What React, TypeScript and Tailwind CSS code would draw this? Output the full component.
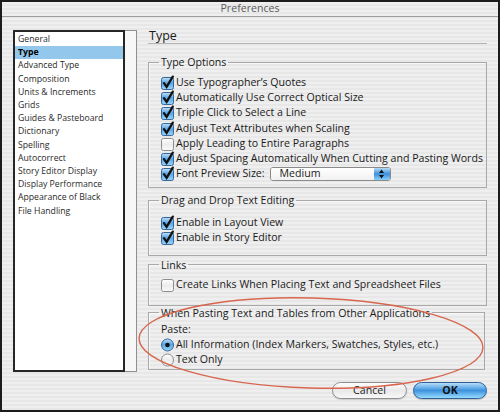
import { FunctionComponent, ReactNode } from 'react';

const listItems = [
  'General',
  'Type',
  'Advanced Type',
  'Composition',
  'Units & Increments',
  'Grids',
  'Guides & Pasteboard',
  'Dictionary',
  'Spelling',
  'Autocorrect',
  'Story Editor Display',
  'Display Performance',
  'Appearance of Black',
  'File Handling',
];

const Check: FunctionComponent<{ on: boolean }> = ({ on }) => (
  <svg width="14" height="14" viewBox="0 0 14 14" className="shrink-0 overflow-visible">
    <rect
      x="0.5"
      y="1.5"
      width="12"
      height="12"
      rx="2"
      fill={on ? 'url(#cbBlue)' : 'url(#cbWhite)'}
      stroke={on ? '#35679c' : '#8c8c8c'}
    />
    {on && (
      <path d="M3 7.2 L5.6 10.8 L11.8 0.6" stroke="#111" strokeWidth="2.3" fill="none" strokeLinecap="round" />
    )}
  </svg>
);

const Radio: FunctionComponent<{ on: boolean }> = ({ on }) => (
  <svg width="14" height="14" viewBox="0 0 14 14" className="shrink-0">
    <circle cx="6.5" cy="7" r="6" fill={on ? 'url(#cbBlue)' : 'url(#cbWhite)'} stroke={on ? '#35679c' : '#8c8c8c'} />
    {on && <circle cx="6.5" cy="7" r="2.3" fill="#111" />}
  </svg>
);

const Row: FunctionComponent<{ children: ReactNode }> = ({ children }) => (
  <div className="flex items-center gap-[1px] h-[15.3px]">{children}</div>
);

const Group: FunctionComponent<{ title: string; className?: string; children: ReactNode }> = ({
  title,
  className,
  children,
}) => (
  <fieldset className={`border border-[#a9a9a9] pl-[12px] shadow-[inset_1px_1px_0_#f7f7f7] ${className ?? ''}`}>
    <legend className="-ml-[2px] px-[2px] text-[10.6px] leading-[14px] text-[#1a1a1a]">{title}</legend>
    {children}
  </fieldset>
);

const App: FunctionComponent = () => {
  return (
    <div className="relative w-[500px] h-[412px] font-['Open_Sans','Liberation_Sans',sans-serif] text-[10.6px] text-[#1a1a1a]">
      <svg width="0" height="0" className="absolute">
        <defs>
          <linearGradient id="cbBlue" x1="0" y1="0" x2="0" y2="1">
            <stop offset="0" stopColor="#c2e1f8" />
            <stop offset="0.45" stopColor="#5aa4e4" />
            <stop offset="1" stopColor="#9ad6fb" />
          </linearGradient>
          <linearGradient id="cbWhite" x1="0" y1="0" x2="0" y2="1">
            <stop offset="0" stopColor="#ffffff" />
            <stop offset="0.5" stopColor="#ececec" />
            <stop offset="1" stopColor="#fafafa" />
          </linearGradient>
        </defs>
      </svg>

      <div className="h-full flex flex-col border-2 border-[#1c1c1c] bg-[repeating-linear-gradient(180deg,#efefef_0px,#efefef_2px,#e7e7e7_2px,#e7e7e7_4px)]">
        <div className="h-[15px] shrink-0 flex items-center justify-center border-b border-[#9c9c9c] text-[10.6px] text-[#5a5a5a]">
          Preferences
        </div>

        <div className="flex flex-1">
          <div className="ml-[11px] mt-[13px] flex h-[342px] shrink-0">
            <div className="w-[112px] border-2 border-[#262626] bg-white pt-[1px]">
              {listItems.map((item) => (
                <div
                  key={item}
                  className={`h-[13.2px] pl-[3px] flex items-center text-[8.7px] ${
                    item === 'Type' ? 'bg-[#93c7ec] font-bold text-black' : 'text-[#2a2a2a]'
                  }`}
                >
                  {item}
                </div>
              ))}
            </div>
            <div className="w-[12px] bg-[#f7f7f7] border border-l-0 border-[#8f8f8f]" />
          </div>

          <div className="ml-[11px] mr-[11px] flex-1 flex flex-col">
            <div className="mt-[13px] h-[14px] border-b border-[#b3b3b3] text-[12.5px] leading-[12px] pl-[1px]">Type</div>

            <Group title="Type Options" className="mt-[11px] pb-[5px]">
              <div className="pt-[6px]">
                <Row><Check on /> Use Typographer’s Quotes</Row>
                <Row><Check on /> Automatically Use Correct Optical Size</Row>
                <Row><Check on /> Triple Click to Select a Line</Row>
                <Row><Check on /> Adjust Text Attributes when Scaling</Row>
                <Row><Check on={false} /> Apply Leading to Entire Paragraphs</Row>
                <Row><Check on /> Adjust Spacing Automatically When Cutting and Pasting Words</Row>
                <Row>
                  <Check on /> Font Preview Size:
                  <div className="ml-[4px] w-[121px] h-[14px] flex rounded-[3px] border border-[#8a8a8a] bg-white overflow-hidden">
                    <div className="flex-1 pl-[9px] flex items-center bg-[linear-gradient(180deg,#ffffff,#f1f1f1)]">Medium</div>
                    <div className="w-[16px] flex flex-col items-center justify-center bg-[linear-gradient(180deg,#b5dbf8,#3d8fdc_50%,#8ad0fa)]">
                      <svg width="7" height="10" viewBox="0 0 7 10">
                        <path d="M3.5 0.5 L6 4 L1 4 Z" fill="#111" />
                        <path d="M3.5 9.5 L6 6 L1 6 Z" fill="#111" />
                      </svg>
                    </div>
                  </div>
                </Row>
              </div>
            </Group>

            <Group title="Drag and Drop Text Editing" className="mt-[5px] pb-[9px]">
              <div className="pt-[8px]">
                <Row><Check on /> Enable in Layout View</Row>
                <Row><Check on /> Enable in Story Editor</Row>
              </div>
            </Group>

            <Group title="Links" className="mt-[2px] pb-[12px]">
              <div className="pt-[6px]">
                <Row><Check on={false} /> Create Links When Placing Text and Spreadsheet Files</Row>
              </div>
            </Group>

            <Group title="When Pasting Text and Tables from Other Applications" className="mt-0 mr-[2px] pb-[1px]">
              <div className="pt-[2px]">
                <Row>Paste:</Row>
                <Row><Radio on /> All Information (Index Markers, Swatches, Styles, etc.)</Row>
                <Row><Radio on={false} /> Text Only</Row>
              </div>
            </Group>

            <div className="mt-[12px] flex justify-end gap-[6px]">
              <button className="w-[75px] h-[17px] rounded-full border border-[#8d8d8d] bg-[linear-gradient(180deg,#ffffff,#e9e9e9_50%,#f8f8f8)] text-[10.6px] leading-[15px] text-[#222] shadow-[0_1px_1px_rgba(0,0,0,0.15)]">
                Cancel
              </button>
              <button className="w-[74px] h-[17px] rounded-full border border-[#2f5f95] bg-[linear-gradient(180deg,#b8defa,#3e93de_50%,#96dcff)] text-[10.6px] leading-[15px] font-bold text-[#111] shadow-[0_1px_1px_rgba(0,0,0,0.2)]">
                OK
              </button>
            </div>
          </div>
        </div>
      </div>

      <svg width="500" height="412" className="absolute left-0 top-0 pointer-events-none">
        <ellipse cx="311" cy="343" rx="172" ry="45" fill="none" stroke="#d8664e" strokeWidth="1.4" transform="rotate(1.6 311 343)" />
      </svg>
    </div>
  );
};

export default App;
